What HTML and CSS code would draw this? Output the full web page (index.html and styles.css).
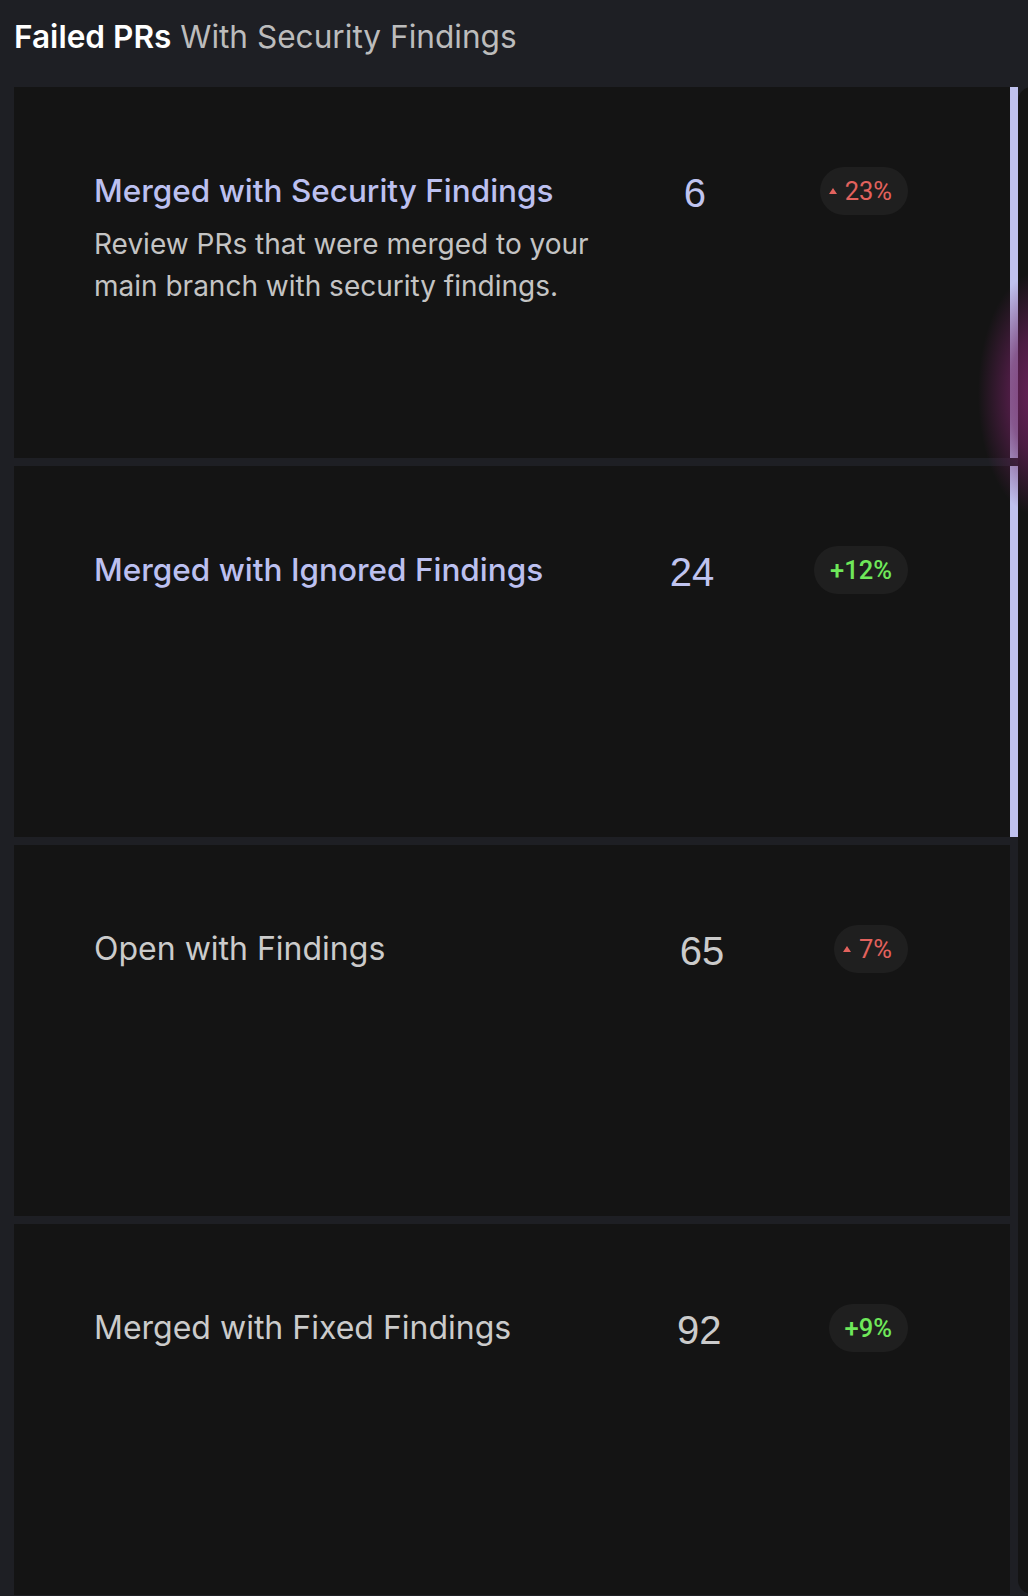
FILE: index.html
```html
<!DOCTYPE html>
<html lang="en">
<head>
<meta charset="utf-8">
<title>Failed PRs With Security Findings</title>
<link rel="stylesheet" href="styles.css">
</head>
<body>
  <header class="head"><span class="head-strong">Failed PRs</span> With Security Findings</header>
  <div class="main">
    <div class="list">
      <div class="card selected">
        <div class="info">
          <div class="title">Merged with Security Findings</div>
          <p class="desc">Review PRs that were merged to your main branch with security findings.</p>
        </div>
        <div class="count">6</div>
        <div class="badge up"><span class="tri"></span>23%</div>
      </div>
      <div class="card selected">
        <div class="info">
          <div class="title">Merged with Ignored Findings</div>
        </div>
        <div class="count">24</div>
        <div class="badge pos">+12%</div>
      </div>
      <div class="card">
        <div class="info">
          <div class="title">Open with Findings</div>
        </div>
        <div class="count">65</div>
        <div class="badge up"><span class="tri"></span>7%</div>
      </div>
      <div class="card">
        <div class="info">
          <div class="title">Merged with Fixed Findings</div>
        </div>
        <div class="count">92</div>
        <div class="badge pos">+9%</div>
      </div>
    </div>
    <div class="panel"></div>
    <div class="glow"></div>
  </div>
</body>
</html>
```
FILE: styles.css
```css
* { box-sizing: border-box; }
html, body {
  margin: 0;
  padding: 0;
  background: #1e1f24;
  overflow: hidden;
}
body {
  font-family: Inter, "Noto Sans", sans-serif;
  width: 1028px;
  height: 1596px;
}
.head {
  padding: 17px 14px 30px;
  font-size: 31.6px;
  line-height: 40px;
  color: #bcbcbc;
  white-space: nowrap;
}
.head-strong {
  color: #ffffff;
  font-weight: 600;
}
.main {
  position: relative;
  display: flex;
  padding-left: 14px;
}
.list {
  flex: 0 0 1004px;
  display: flex;
  flex-direction: column;
  gap: 8px;
}
.card {
  height: 371px;
  display: flex;
  align-items: flex-start;
  padding: 84px 102px 0 80px;
  background: #141414;
  background-clip: padding-box;
  border-right: 8px solid transparent;
}
.card.selected {
  border-right-color: #bfc1ee;
}
.info {
  flex: 0 0 508px;
}
.title {
  font-size: 32px;
  line-height: 40px;
  color: #cbcbcb;
  white-space: nowrap;
}
.selected .title {
  color: #bcc0f0;
  font-weight: 500;
  font-size: 31.5px;
}
.desc {
  margin: 12px 0 0;
  font-size: 28px;
  line-height: 42px;
  color: #c4c4c4;
}
.count {
  flex: 1;
  margin-left: -32px;
  margin-top: 2px;
  text-align: center;
  font-family: "Liberation Sans", Arial, sans-serif;
  font-size: 40px;
  line-height: 40px;
  color: #cbcbcb;
}
.selected .count {
  color: #c0c4f0;
}
.badge {
  margin-top: -4px;
  height: 48px;
  display: inline-flex;
  align-items: center;
  padding: 0 16px;
  border-radius: 24px;
  background: #1f1f1f;
  font-family: Roboto, Inter, sans-serif;
  font-size: 25.5px;
  font-weight: 500;
  white-space: nowrap;
}
.badge.up {
  color: #e3625d;
  padding-left: 9px;
  font-weight: 400;
}
.badge.pos {
  color: #6fe85a;
}
.tri {
  width: 0;
  height: 0;
  border-left: 4.5px solid transparent;
  border-right: 4.5px solid transparent;
  border-bottom: 6px solid #e3625d;
  margin-right: 8px;
}
.panel {
  flex: 0 0 300px;
  height: 1507px;
  border-radius: 14px;
  background: #141414;
}
.glow {
  position: absolute;
  left: 978px;
  top: 184px;
  width: 124px;
  height: 246px;
  background: radial-gradient(ellipse closest-side, rgba(118, 36, 100, 0.9) 0%, rgba(104, 32, 90, 0.65) 50%, rgba(80, 24, 70, 0) 100%);
  pointer-events: none;
}
```
